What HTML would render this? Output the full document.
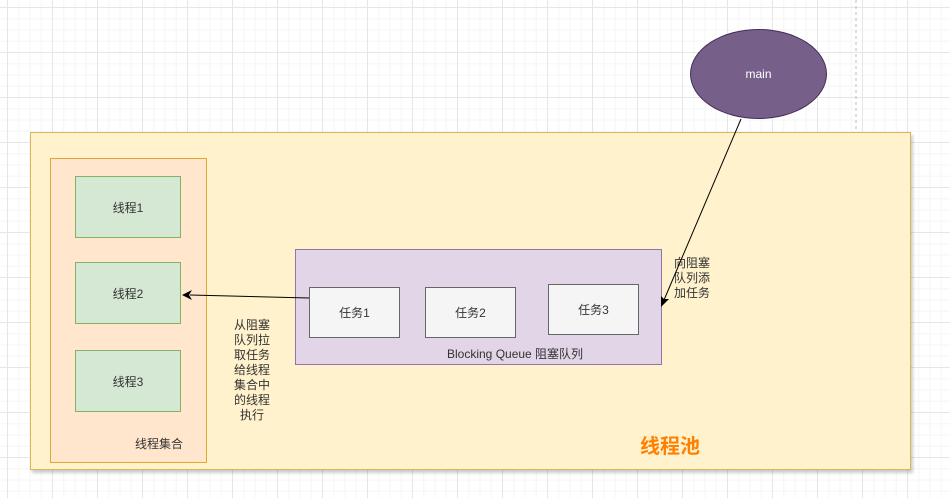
<!DOCTYPE html>
<html><head><meta charset="utf-8"><style>
body{margin:0;width:950px;height:498px;overflow:hidden;background:#fff;font-family:"Liberation Sans","Noto Sans CJK SC",sans-serif;position:relative;
background-image:linear-gradient(#e6e6e6 1px,transparent 1px),linear-gradient(90deg,#e6e6e6 1px,transparent 1px),linear-gradient(#f5f5f5 1px,transparent 1px),linear-gradient(90deg,#f5f5f5 1px,transparent 1px);
background-size:45px 45px,45px 45px,11.25px 11.25px,11.25px 11.25px;background-position:7px 7px}
div{position:absolute;box-sizing:border-box}
.t{display:flex;align-items:center;justify-content:center;font-size:12px;color:#333}
.g{left:75px;width:106px;height:62px;background:#d5e8d4;border:1px solid #82b366}
.k{width:91px;height:51px;background:#f5f5f5;border:1px solid #666}
.lbl{font-size:12px;color:#333;line-height:15px;text-align:center}
</style></head><body>
<div style="left:30px;top:132px;width:881px;height:338px;background:#fff2cc;border:1px solid #d6b656;box-shadow:2px 3px 3px rgba(0,0,0,.2)"></div>
<div style="left:50px;top:158px;width:157px;height:305px;background:#ffe6cc;border:1px solid #e0a82e"></div>
<div class="t g" style="top:176px">线程1</div>
<div class="t g" style="top:262px">线程2</div>
<div class="t g" style="top:350px">线程3</div>
<div class="lbl" style="left:135px;top:437px">线程集合</div>
<div style="left:295px;top:249px;width:367px;height:116px;background:#e1d5e7;border:1px solid #9673a6"></div>
<div class="t k" style="left:309px;top:287px">任务1</div>
<div class="t k" style="left:425px;top:287px">任务2</div>
<div class="t k" style="left:548px;top:284px">任务3</div>
<div class="lbl" style="left:447px;top:347px">Blocking Queue 阻塞队列</div>
<div class="lbl" style="left:227px;top:318px;width:50px">从阻塞<br>队列拉<br>取任务<br>给线程<br>集合中<br>的线程<br>执行</div>
<div class="lbl" style="left:668px;top:256px;width:48px">向阻塞<br>队列添<br>加任务</div>
<div style="left:640px;top:430px;font-size:20px;font-weight:bold;color:#ff8000">线程池</div>
<div class="t" style="left:690px;top:29px;width:137px;height:90px;border-radius:50%;background:#76608a;border:1px solid #432d57;color:#fff">main</div>
<svg width="950" height="498" style="position:absolute;left:0;top:0">
<line x1="309" y1="298" x2="190" y2="295" stroke="#000" stroke-width="1"/>
<path d="M182 295 L192 290 L189 295 L192 300Z" fill="#000"/>
<line x1="741" y1="119" x2="664" y2="300" stroke="#000" stroke-width="1"/>
<path d="M661 307 L661 296 L664 299 L669 299Z" fill="#000"/>
<line x1="856" y1="0" x2="856" y2="132" stroke="#bbb" stroke-dasharray="3 3"/>
</svg>
</body></html>
